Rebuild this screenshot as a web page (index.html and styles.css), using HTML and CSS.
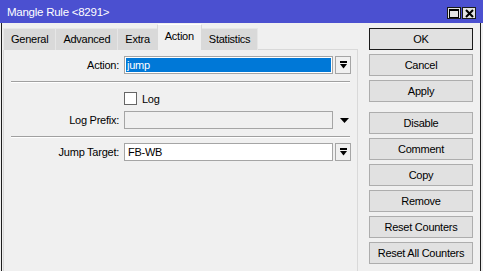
FILE: index.html
```html
<!DOCTYPE html>
<html lang="en">
<head>
    <meta charset="UTF-8">
    <meta name="viewport" content="width=device-width, initial-scale=1.0">
    <title>Mangle Rule &lt;8291&gt;</title>
    <link rel="stylesheet" href="styles.css">
</head>
<body>

    <div class="window">

        <!-- Title Bar -->
        <div class="titlebar">
            <span class="title">Mangle Rule &lt;8291&gt;</span>
            <div class="title-buttons">
                <span class="title-btn">
                    <svg width="10" height="9" viewBox="0 0 10 9"><rect x="0.5" y="0.5" width="9" height="8" fill="none" stroke="#000"/><rect x="0" y="0" width="10" height="2" fill="#000"/></svg>
                </span>
                <span class="title-btn">
                    <svg width="9" height="9" viewBox="0 0 9 9"><path d="M1 1L8 8M8 1L1 8" stroke="#000" stroke-width="2"/></svg>
                </span>
            </div>
        </div>

        <div class="frame">

            <!-- Tabs and Form -->
            <div class="main">
                <div class="tabs">
                    <div class="tab">General</div>
                    <div class="tab">Advanced</div>
                    <div class="tab">Extra</div>
                    <div class="tab active">Action</div>
                    <div class="tab">Statistics</div>
                </div>

                <div class="panel">
                    <div class="row">
                        <label class="label">Action:</label>
                        <div class="field selected"><span class="sel-text">jump</span></div>
                        <span class="drop-btn">
                            <svg width="7" height="8" viewBox="0 0 7 8"><rect x="0" y="0" width="7" height="2" fill="#000"/><path d="M0 3h7L3.5 7.5z" fill="#000"/></svg>
                        </span>
                    </div>

                    <div class="separator"></div>

                    <div class="check-row">
                        <span class="checkbox"></span>
                        <span>Log</span>
                    </div>

                    <div class="row prefix-row">
                        <label class="label">Log Prefix:</label>
                        <div class="field disabled"></div>
                        <span class="drop-arrow">
                            <svg width="9" height="5" viewBox="0 0 9 5"><path d="M0 0h9L4.5 5z" fill="#000"/></svg>
                        </span>
                    </div>

                    <div class="separator"></div>

                    <div class="row jump-row">
                        <label class="label">Jump Target:</label>
                        <div class="field">FB-WB</div>
                        <span class="drop-btn">
                            <svg width="7" height="8" viewBox="0 0 7 8"><rect x="0" y="0" width="7" height="2" fill="#000"/><path d="M0 3h7L3.5 7.5z" fill="#000"/></svg>
                        </span>
                    </div>
                </div>
            </div>

            <!-- Side Buttons -->
            <div class="side">
                <button class="btn default">OK</button>
                <button class="btn">Cancel</button>
                <button class="btn">Apply</button>
                <button class="btn spaced">Disable</button>
                <button class="btn">Comment</button>
                <button class="btn">Copy</button>
                <button class="btn">Remove</button>
                <button class="btn">Reset Counters</button>
                <button class="btn">Reset All Counters</button>
            </div>

        </div>
    </div>

</body>
</html>
```

FILE: styles.css
```css
/* General Styling */
body {
    margin: 0;
    padding: 0;
    font-family: "Liberation Sans", Arial, sans-serif;
    font-size: 11px;
    letter-spacing: -0.25px;
    color: #000;
    background: #f0f0f0;
}

.window {
    width: 483px;
    height: 271px;
    overflow: hidden;
    background: #f0f0f0;
    display: flex;
    flex-direction: column;
}

/* Title Bar */
.titlebar {
    height: 23px;
    flex: none;
    background: #4b50d0;
    color: #fff;
    display: flex;
    align-items: center;
    justify-content: space-between;
    padding: 0 7px 0 7px;
    font-size: 11.5px;
}

.title-buttons {
    display: flex;
    gap: 1px;
    margin-top: 3px;
}

.title-btn {
    width: 12px;
    height: 10px;
    border: 1px solid #1a1a1a;
    background: #e3e3e3;
    display: flex;
    align-items: center;
    justify-content: center;
}

/* Window Frame */
.frame {
    flex: 1;
    margin: 0 2px 0 1px;
    border-left: 1px solid #1e1e1e;
    border-right: 1px solid #1e1e1e;
    display: flex;
    min-height: 0;
}

.main {
    width: 355px;
    margin-left: 1px;
    padding-top: 2px;
    display: flex;
    flex-direction: column;
}

/* Tabs */
.tabs {
    display: flex;
    align-items: flex-end;
    height: 25px;
    position: relative;
    z-index: 1;
}

.tab {
    height: 21px;
    line-height: 21px;
    padding: 0 7px;
    background: #d9d9d9;
    border: 1px solid #e6e6e6;
    border-bottom: none;
    margin-right: -1px;
}

.tab.active {
    height: 25px;
    line-height: 22px;
    background: #f0f0f0;
    border-color: #d9d9d9;
    border-top-color: #ffffff;
    padding: 0 7px;
    position: relative;
    z-index: 2;
}

/* Panel */
.panel {
    flex: 1;
    border: 1px solid #d9d9d9;
    border-bottom: none;
    margin-top: -1px;
    padding-top: 6px;
    background: #f0f0f0;
}

.row {
    display: flex;
    align-items: center;
    height: 18px;
}

.label {
    width: 115px;
    text-align: right;
    flex: none;
}

.field {
    width: 209px;
    height: 18px;
    box-sizing: border-box;
    margin-left: 5px;
    border: 1px solid #a5a5a5;
    background: #fff;
    padding: 0 3px;
    line-height: 16px;
    flex: none;
}

.field.selected {
    padding: 1px;
}

.sel-text {
    display: block;
    height: 14px;
    line-height: 14px;
    background: #0078d7;
    color: #fff;
    padding-left: 1px;
}

.field.disabled {
    background: #f0f0f0;
}

.drop-btn {
    width: 16px;
    height: 18px;
    box-sizing: border-box;
    margin-left: 2px;
    border: 1px solid #a5a5a5;
    background: #f0f0f0;
    display: flex;
    align-items: center;
    justify-content: center;
}

.drop-arrow {
    width: 16px;
    margin-left: 3px;
    display: flex;
    justify-content: center;
}

.separator {
    margin: 7px 7px 0 7px;
    border-top: 1px solid #a0a0a0;
    border-bottom: 1px solid #ffffff;
}

.check-row {
    display: flex;
    align-items: center;
    gap: 5px;
    height: 13px;
    margin: 9px 0 0 120px;
}

.checkbox {
    width: 11px;
    height: 11px;
    border: 1px solid #666;
    background: #fff;
}

.prefix-row {
    margin-top: 6px;
}

.jump-row {
    margin-top: 5px;
}

/* Side Buttons */
.side {
    width: 104px;
    margin-left: 11px;
    padding-top: 5px;
    display: flex;
    flex-direction: column;
    gap: 4px;
}

.btn {
    height: 22px;
    margin: 0;
    padding: 0;
    font-family: inherit;
    font-size: 11px;
    letter-spacing: -0.25px;
    color: #000;
    background: #e1e1e1;
    border: 1px solid #adadad;
}

.btn.default {
    border-color: #1a1a1a;
}

.btn.spaced {
    margin-top: 6px;
}
```
